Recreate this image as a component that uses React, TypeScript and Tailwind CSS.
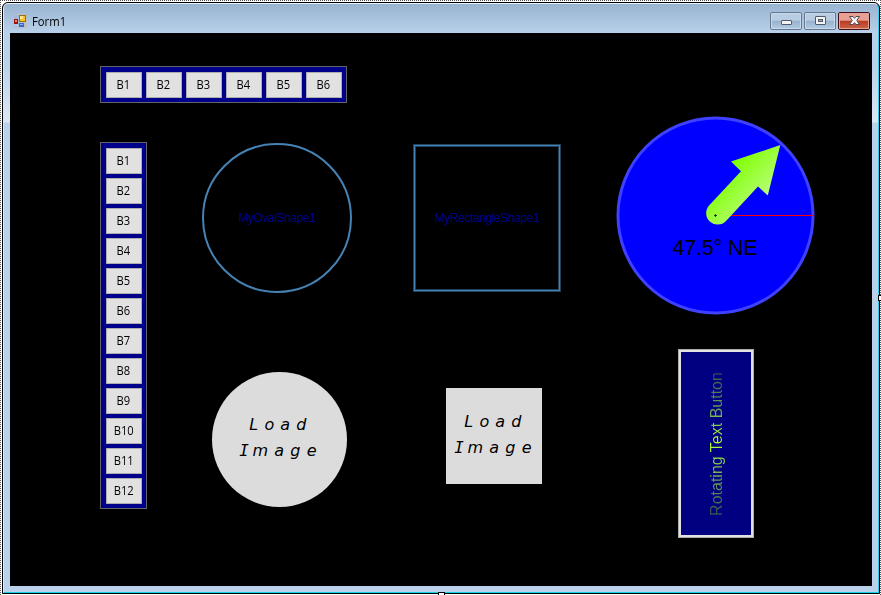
import React from "react";

const ui = "font-['Open_Sans','Noto_Sans',sans-serif]";

function ToolButton({ label }: { label: string }) {
  return (
    <button className={`flex h-[26px] w-9 shrink-0 items-center justify-center border border-[#adadad] bg-[#e1e1e1] pr-px text-xs text-black ${ui}`}>
      <span className="scale-x-[0.93]">{label}</span>
    </button>
  );
}

function ToolStrip({ count, vertical = false }: { count: number; vertical?: boolean }) {
  return (
    <div className={`flex w-max gap-1 border border-[#646464] bg-[#00008b] p-[5px] pr-1 pb-1 ${vertical ? "flex-col" : "flex-row"}`}>
      {Array.from({ length: count }, (_, i) => (
        <ToolButton key={i} label={`B${i + 1}`} />
      ))}
    </div>
  );
}

function LoadImage() {
  return (
    <div className="text-center font-['DejaVu_Sans',sans-serif] text-[16px] leading-[26px] italic text-black">
      <div className="tracking-[6.2px]">Load</div>
      <div className="tracking-[6.2px]">
        <span className="font-['DejaVu_Sans_Mono',monospace] tracking-[3.6px]">I</span>mage
      </div>
    </div>
  );
}

function FormIcon() {
  return (
    <svg width="14" height="14" viewBox="0 0 14 14" shapeRendering="crispEdges">
      <rect width="14" height="14" fill="#b9bfc6" />
      <rect x="5" y="1" width="1" height="12" fill="#a3bbd6" />
      <rect x="1" y="1" width="4" height="4" fill="#a3bbd6" />
      <rect x="1" y="10" width="4" height="3" fill="#b0c8e2" />
      <rect x="1" y="5" width="4" height="5" fill="#9b1610" />
      <rect x="2" y="6" width="2" height="2" fill="#f08070" />
      <rect x="6" y="1" width="7" height="7" fill="#9a7112" />
      <rect x="7" y="2" width="5" height="5" fill="#f8c12c" />
      <rect x="7" y="2" width="3" height="3" fill="#ffe58a" />
      <rect x="6" y="9" width="5" height="4" fill="#3b68c8" />
      <rect x="7" y="10" width="3" height="1" fill="#8db1f2" />
    </svg>
  );
}

function CaptionButton({ kind }: { kind: "min" | "max" | "close" }) {
  return (
    <div className={`flex h-[18px] w-8 items-center justify-center rounded-[2px] border ${kind === "close" ? "border-[#43101a]" : "border-[#65788f]"}`}>
      <div className={`flex h-4 w-[30px] justify-center rounded-[1px] border ${kind === "close" ? "border-[#e4a497] bg-linear-to-b from-[#e8a094] from-45% via-[#b93a20] via-50% to-[#c95f43]" : "border-[#c8d9eb] bg-linear-to-b from-[#b8cce2] from-45% via-[#98b2ce] via-50% to-[#aec8e2]"}`}>
        <svg width="14" height="14" viewBox="0 0 14 14">
          {kind === "min" && <rect x="2.5" y="6.5" width="10" height="4" rx="0.5" fill="#f2f2f2" stroke="#525b6a" />}
          {kind === "max" && (
            <>
              <rect x="2.5" y="2.5" width="10" height="8" rx="0.5" fill="#f4f4f4" stroke="#525b6a" />
              <rect x="5.5" y="5.5" width="4" height="2" fill="#91aed0" stroke="#525b6a" />
            </>
          )}
          {kind === "close" && (
            <path d="M2.5 2.5H6L7.5 4.3L9 2.5H12.5L9.8 6.5L12.5 10.5H9L7.5 8.7L6 10.5H2.5L5.2 6.5Z" fill="#f5f5f5" stroke="#544a55" />
          )}
        </svg>
      </div>
    </div>
  );
}

function Compass() {
  return (
    <svg width="200" height="200" viewBox="615 115 200 200">
      <defs>
        <linearGradient id="needle" gradientUnits="userSpaceOnUse" x1="733" y1="162" x2="771" y2="197">
          <stop offset="0" stopColor="#7fff00" />
          <stop offset="1" stopColor="#bcff80" />
        </linearGradient>
      </defs>
      <circle cx="715.5" cy="215.5" r="97.5" fill="#0000ff" stroke="#4040ff" strokeWidth="3" />
      <path d="M715 215.5H814" stroke="#ff0000" />
      <path d="M780.3 145L731 161.6L741 171.2L709.3 205.2A11 11 0 1 0 726 221L758 186.6L767.8 195.6Z" fill="url(#needle)" />
      <path d="M714 215.5h3M715.5 214v3" stroke="#163000" strokeWidth="0.9" />
      <text x="672.5" y="255" textLength="85" fontSize="21.5" fontFamily="Liberation Sans, sans-serif" fill="#000">47.5° NE</text>
    </svg>
  );
}

export default function App() {
  return (
    <div className="relative h-[595px] w-[881px] overflow-hidden bg-white pt-[2px] pl-[2px]">
      <div className="absolute inset-x-0 top-0 h-px bg-[repeating-linear-gradient(90deg,#555_0_1px,#fff_1px_2px)]" />
      <div className="absolute inset-y-0 left-0 w-px bg-[repeating-linear-gradient(180deg,#555_0_1px,#fff_1px_2px)]" />
      <div className="absolute inset-y-0 right-0 w-px bg-[repeating-linear-gradient(180deg,#555_0_1px,#fff_1px_2px)]" />
      <div className="h-[592px] w-[878px] rounded-t-[6px] border border-black bg-black">
        <div className="h-[590px] w-[876px] rounded-t-[5px] border border-t-[#e8f2fa] border-r-[#35cbed] border-b-[#18d2e8] border-l-[#dceaf6] bg-[linear-gradient(180deg,#99b4d1_0px,#b9d1ea_29px,#b9d1ea_60px,#dce7f3_118px,#b9d1ea_119px)]">
          <header className="flex h-[29px] items-center pr-2 pl-[9px]">
            <div className="pt-[5px]"><FormIcon /></div>
            <span className={`mt-[7px] ml-[5px] origin-left scale-x-[0.94] text-xs text-black ${ui}`}>Form1</span>
            <div className="mt-[5px] ml-auto flex gap-[2px]">
              <CaptionButton kind="min" />
              <CaptionButton kind="max" />
              <CaptionButton kind="close" />
            </div>
          </header>
          <main className="ml-[6px] flex h-[553px] w-[862px] bg-black pl-[90px]">
            <section className="flex w-[47px] shrink-0 flex-col gap-[39px] pt-[33px]">
              <ToolStrip count={6} />
              <ToolStrip count={12} vertical />
            </section>
            <section className="ml-[55px] flex w-[150px] shrink-0 flex-col pt-[110px]">
              <div className="flex h-[150px] w-[150px] items-center justify-center rounded-full border-2 border-[#4682b4] font-['Liberation_Sans',Arial,sans-serif] text-xs tracking-[-0.4px] text-[#00008b]">
                MyOvalShape1
              </div>
              <div className="mt-[79px] ml-[10px] flex h-[135px] w-[135px] items-center justify-center rounded-full bg-[#dcdcdc] pb-[3px] pl-[3px]">
                <LoadImage />
              </div>
            </section>
            <section className="ml-[61px] flex w-[148px] shrink-0 flex-col pt-[111px]">
              <div className="flex h-[148px] w-[148px] items-center justify-center border border-[#234159] bg-[#4682b4] p-px">
                <div className="flex h-full w-full items-center justify-center border border-[#234159] bg-black font-['Liberation_Sans',Arial,sans-serif] text-xs tracking-[-0.4px] text-[#00008b]">
                  MyRectangleShape1
                </div>
              </div>
              <div className="mt-[96px] ml-[33px] flex h-24 w-24 items-center justify-center bg-[#dcdcdc] pl-1 pb-[3px]">
                <LoadImage />
              </div>
            </section>
            <section className="ml-[54px] flex w-[200px] shrink-0 flex-col pt-[82px]">
              <Compass />
              <button className="mt-[34px] ml-[63px] h-[189px] w-[76px] border border-[#adadad] bg-[#e1e1e1] p-[2px]">
                <span className="flex h-full w-full items-center justify-center bg-[#000080] pl-px">
                  <span className="shrink-0 -rotate-90 bg-linear-to-r from-[#2f4f4f] via-[#adff2f] to-[#2f4f4f] bg-clip-text font-['Liberation_Sans',Arial,sans-serif] text-[16px] whitespace-nowrap text-transparent">
                    Rotating Text Button
                  </span>
                </span>
              </button>
            </section>
          </main>
        </div>
      </div>
      <div className="absolute top-[295px] left-[878px] h-[6px] w-[6px] border border-black bg-white" />
      <div className="absolute top-[592px] left-[438px] h-[6px] w-[7px] border border-black bg-white" />
    </div>
  );
}
